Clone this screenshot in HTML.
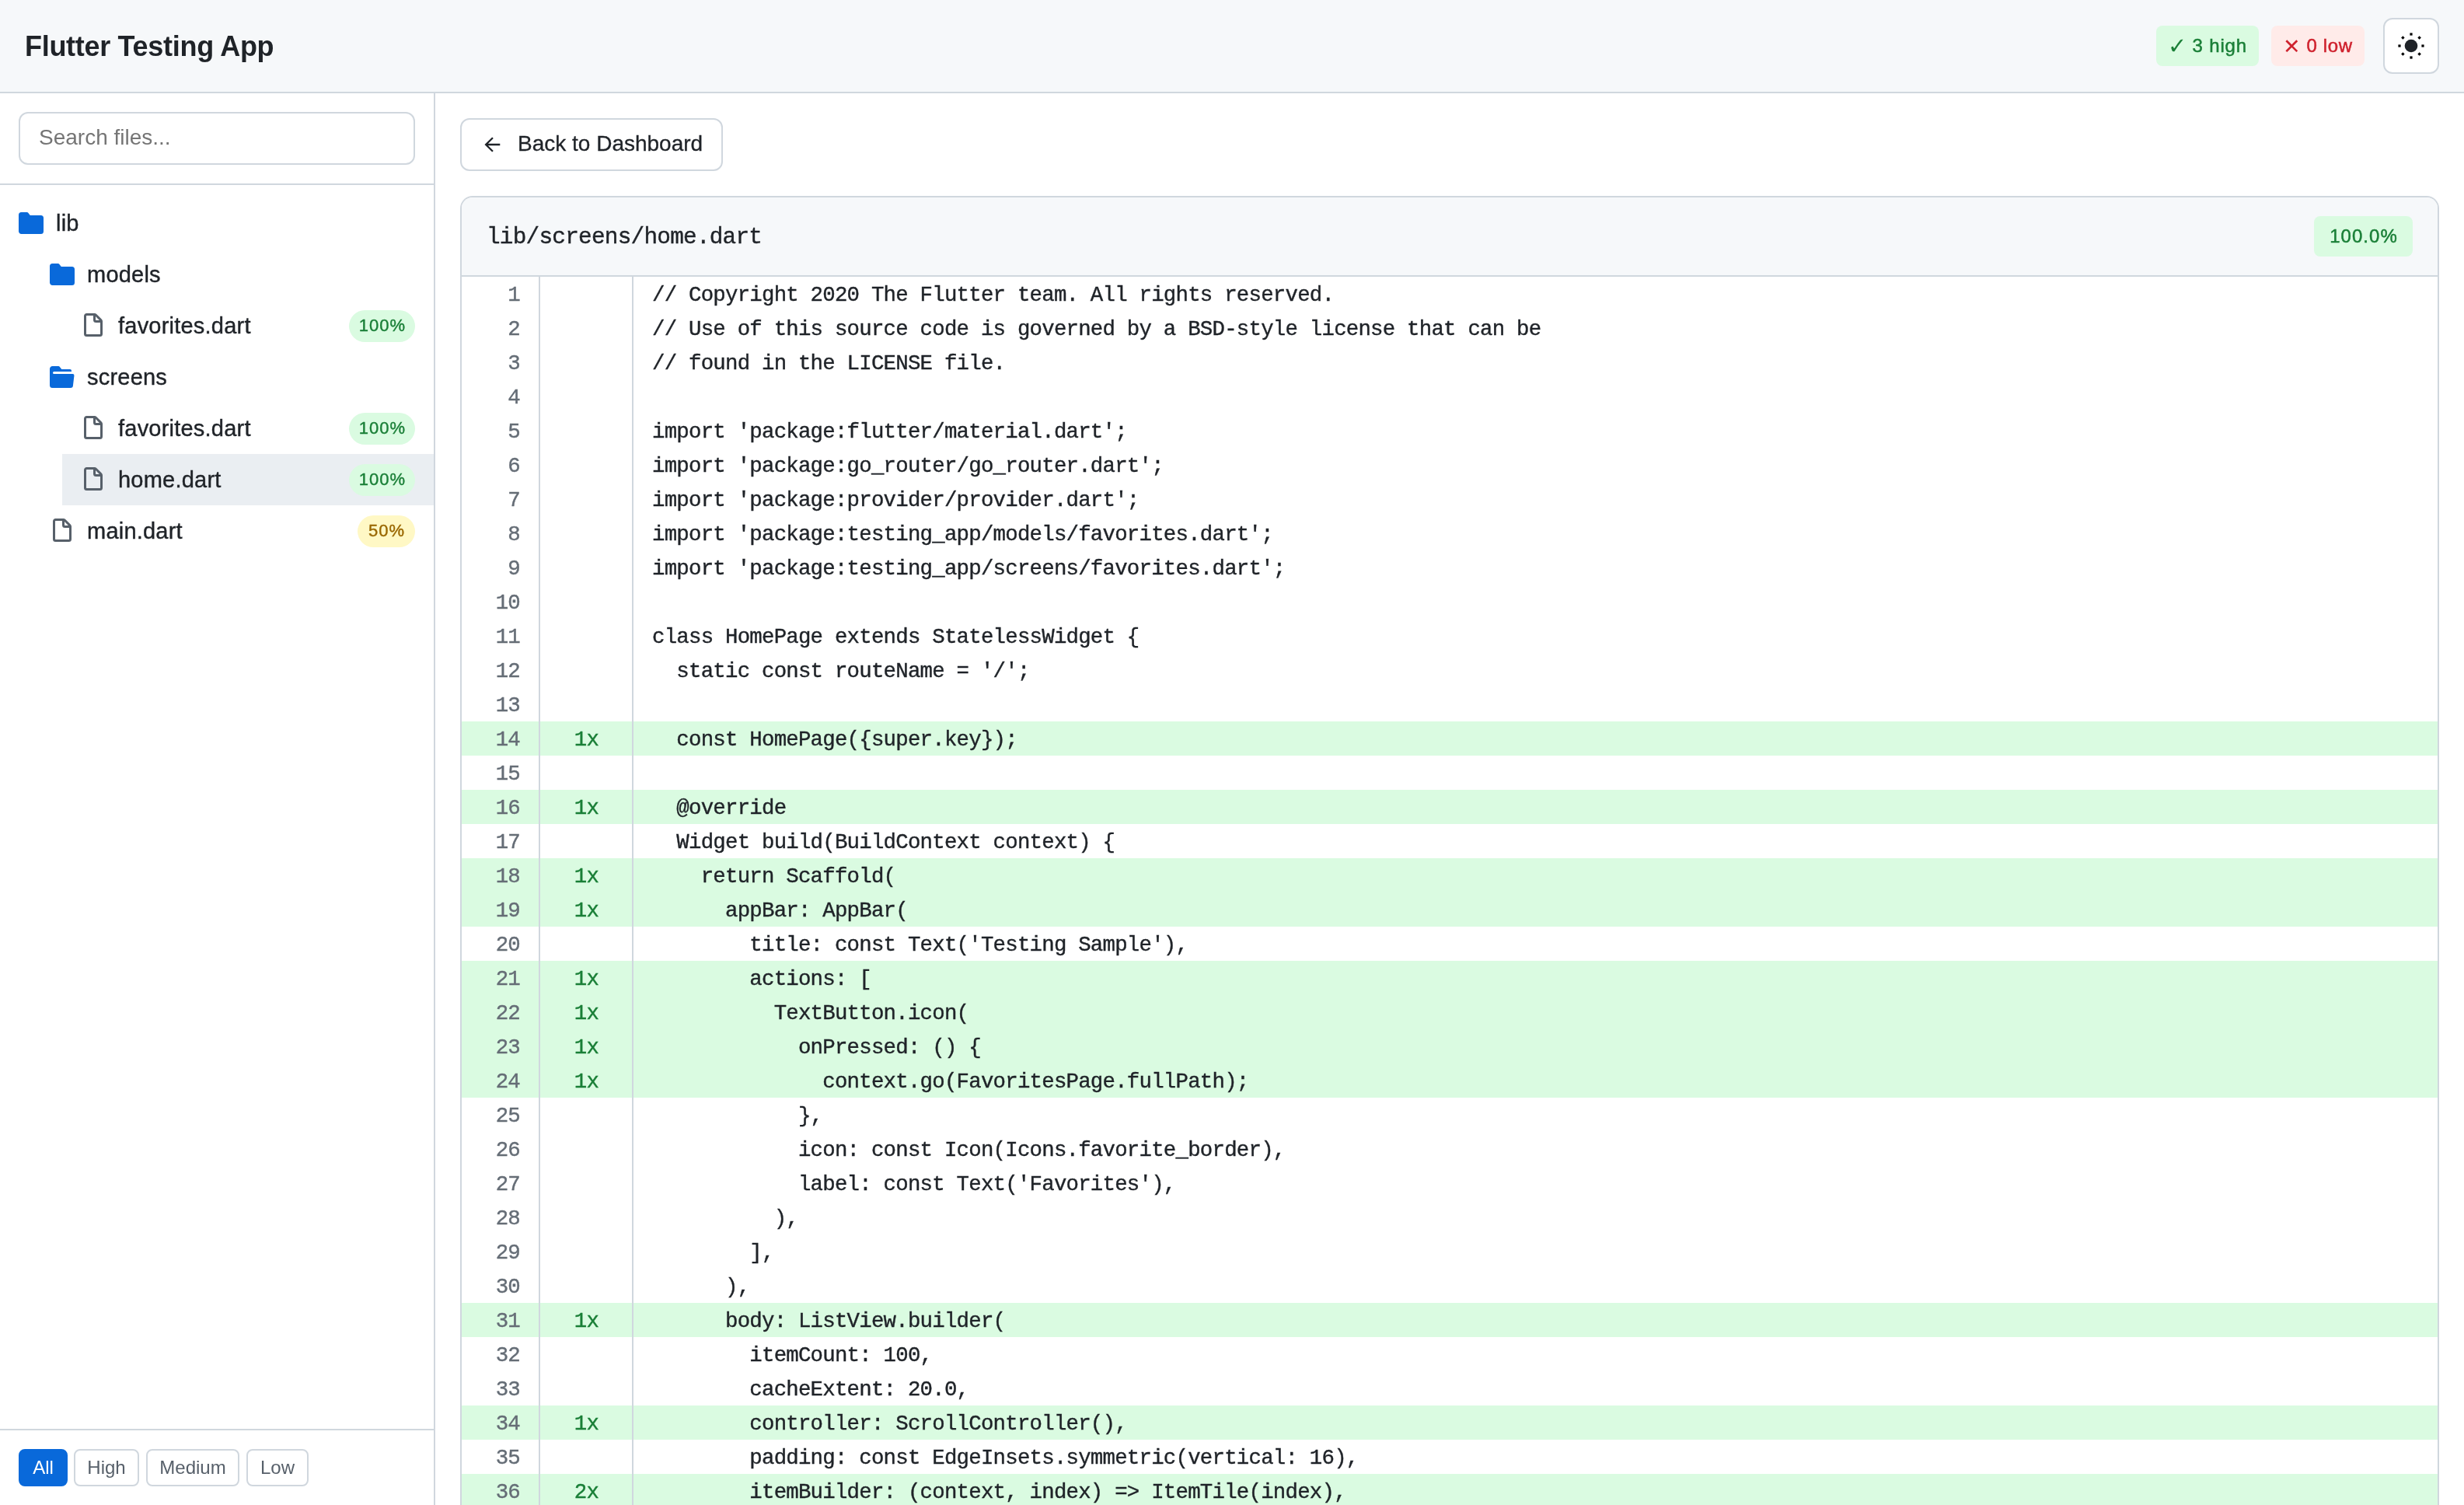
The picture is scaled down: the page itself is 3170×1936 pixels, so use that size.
<!DOCTYPE html>
<html lang="en">
<head>
<meta charset="utf-8">
<title>Flutter Testing App - Coverage</title>
<style>
html{zoom:2;margin:0;padding:0;background:#fff;overflow:hidden;}
*{box-sizing:border-box;}
body{margin:0;padding:0;width:1585px;height:968px;overflow:hidden;position:relative;background:#fff;color:#1f2328;
  font-family:"Liberation Sans",Arial,Helvetica,sans-serif;font-size:14px;line-height:1.5;transform-origin:0 0;will-change:transform;}
@media (max-width:2000px){html{width:792.5px;height:484px;}body{transform:scale(0.5);}}
.mono{font-family:"Liberation Mono","DejaVu Sans Mono",monospace;-webkit-text-stroke:0.2px currentColor;}

/* header */
#hdr{position:absolute;left:0;top:0;width:1585px;height:60px;background:#f6f8fa;border-bottom:1px solid #d0d7de;}
#title{position:absolute;left:16px;top:16.5px;font-size:18px;font-weight:700;line-height:27px;letter-spacing:-0.15px;color:#1f2328;white-space:nowrap;}
.hb{position:absolute;top:16.5px;height:26px;border-radius:4px;font-size:12px;font-weight:500;line-height:26px;letter-spacing:0.42px;white-space:nowrap;text-align:center;-webkit-text-stroke:0.25px currentColor;}
.hb span{font-size:14.5px;letter-spacing:0;-webkit-text-stroke:0;line-height:0;position:relative;top:1.1px;}
#hb2 span{font-size:13.4px;}
#hb2{letter-spacing:0.3px;}
#hb1{left:1387px;width:66px;background:#dafbe1;color:#1a7f37;}
#hb2{left:1461px;width:60px;background:#ffebe9;color:#cf222e;}
#theme{position:absolute;left:1533px;top:11.5px;width:36px;height:36px;border:1px solid #d0d7de;border-radius:6px;background:#fff;}
#theme svg{position:absolute;left:8px;top:8px;width:18px;height:18px;}

/* sidebar */
#side{position:absolute;left:0;top:60px;width:280px;height:908px;border-right:1px solid #d0d7de;background:#fff;}
#search{position:absolute;left:0;top:0;width:279px;height:59px;border-bottom:1px solid #d0d7de;}
#sbox{position:absolute;left:12px;top:12px;width:255px;height:34px;border:1px solid #d0d7de;border-radius:6px;background:#fff;
  padding:0 12px;font-size:14px;line-height:30.5px;color:#757575;white-space:nowrap;}
#tree{position:absolute;left:0;top:67px;width:279px;}
.row{position:relative;height:33px;padding-left:12px;white-space:nowrap;}
.row.sel{background:#eaeef2;}
.l1{margin-left:20px;}
.l2{margin-left:40px;}
.row svg{position:absolute;left:12px;top:8.5px;width:16px;height:16px;}
.row .nm{position:absolute;left:36px;top:6px;-webkit-text-stroke:0.2px currentColor;font-size:14.5px;line-height:21px;letter-spacing:0.11px;color:#1f2328;}
.pill{position:absolute;right:12px;top:6.5px;height:20.5px;width:42.5px;border-radius:10.25px;text-align:center;font-size:11px;font-weight:500;line-height:20px;letter-spacing:0.5px;padding-left:0.5px;-webkit-text-stroke:0.2px currentColor;}
.pill.py{width:37px;}
.pg{background:#dafbe1;color:#1a7f37;}
.py{background:#fff8c5;color:#9a6700;}
#foot{position:absolute;left:0;bottom:0;width:279px;height:49px;border-top:1px solid #d0d7de;}
.fb{position:absolute;top:12px;height:24px;border:1px solid #d0d7de;border-radius:4px;background:#fff;color:#57606a;font-size:12px;line-height:22px;text-align:center;white-space:nowrap;}
.fb.on{background:#0969da;border-color:#0969da;color:#fff;}

/* main */
#back{position:absolute;left:296px;top:76px;width:169px;height:34px;border:1px solid #d0d7de;border-radius:6px;background:#fff;}
#back .ar{position:absolute;left:14px;top:9.15px;width:14px;height:14px;}
#back .tx{position:absolute;left:36px;top:0;font-size:14px;line-height:31px;-webkit-text-stroke:0.15px currentColor;color:#1f2328;white-space:nowrap;}
#card{position:absolute;left:296px;top:126px;width:1273px;height:842px;border:1px solid #d0d7de;border-bottom:none;border-radius:8px 8px 0 0;overflow:hidden;background:#fff;}
#chead{position:absolute;left:0;top:0;width:1271px;height:51px;background:#f6f8fa;border-bottom:1px solid #d0d7de;}
#cpath{position:absolute;left:16px;top:12px;font-size:14.7px;letter-spacing:-0.385px;line-height:28px;color:#1f2328;white-space:nowrap;}
#cpct{position:absolute;right:16px;top:12px;height:26px;width:63.5px;border-radius:4px;background:#dafbe1;color:#1a7f37;font-size:12px;font-weight:500;line-height:26px;letter-spacing:0.52px;padding-left:0.5px;text-align:center;-webkit-text-stroke:0.25px currentColor;}
#code{position:absolute;left:0;top:51px;width:1271px;}
.ln{position:relative;height:22px;font-size:13.7px;letter-spacing:-0.387px;line-height:23.6px;white-space:pre;}
.ln.c{background:#dafbe1;}
.ln span{position:absolute;top:0;height:22px;}
.ln .n{left:0;width:50.5px;padding-right:13px;text-align:right;color:#656d76;}
.ln .h{left:50.5px;width:59px;text-align:center;padding-left:0.4px;color:#1a7f37;}
.vb{position:absolute;top:0;width:1px;height:800px;background:#d0d7de;z-index:2;}
.ln .t{left:122.5px;color:#1f2328;}
</style>
</head>
<body>
<div id="hdr">
  <div id="title">Flutter Testing App</div>
  <div class="hb" id="hb1"><span>✓</span> 3 high</div>
  <div class="hb" id="hb2"><span>✕</span> 0 low</div>
  <div id="theme"><svg viewBox="0 0 18 18"><circle cx="9" cy="9" r="4.15" fill="#1f2328"/><g fill="#000"><rect x="8.2" y="0.7" width="1.6" height="1.6"/><rect x="8.2" y="15.7" width="1.6" height="1.6"/><rect x="0.7" y="8.2" width="1.6" height="1.6"/><rect x="15.7" y="8.2" width="1.6" height="1.6"/><rect x="8.2" y="0.7" width="1.6" height="1.6" transform="rotate(45 9 9)"/><rect x="8.2" y="0.7" width="1.6" height="1.6" transform="rotate(135 9 9)"/><rect x="8.2" y="0.7" width="1.6" height="1.6" transform="rotate(225 9 9)"/><rect x="8.2" y="0.7" width="1.6" height="1.6" transform="rotate(315 9 9)"/></g></svg></div>
</div>

<div id="side">
  <div id="search"><div id="sbox">Search files...</div></div>
  <div id="tree">
    <div class="row"><svg viewBox="0 0 16 16"><path fill="#0969da" d="M1.75 1A1.75 1.75 0 0 0 0 2.75v10.5C0 14.216.784 15 1.75 15h12.5A1.75 1.75 0 0 0 16 13.25v-8.5A1.75 1.75 0 0 0 14.25 3H7.5a.25.25 0 0 1-.2-.1l-.9-1.2C6.07 1.26 5.55 1 5 1H1.75Z"/></svg><span class="nm">lib</span></div>
    <div class="row l1"><svg viewBox="0 0 16 16"><path fill="#0969da" d="M1.75 1A1.75 1.75 0 0 0 0 2.75v10.5C0 14.216.784 15 1.75 15h12.5A1.75 1.75 0 0 0 16 13.25v-8.5A1.75 1.75 0 0 0 14.25 3H7.5a.25.25 0 0 1-.2-.1l-.9-1.2C6.07 1.26 5.55 1 5 1H1.75Z"/></svg><span class="nm">models</span></div>
    <div class="row l2"><svg viewBox="0 0 16 16"><path fill="#57606a" d="M3.75 1.5a.25.25 0 00-.25.25v11.5c0 .138.112.25.25.25h8.5a.25.25 0 00.25-.25V6H9.75A1.75 1.75 0 018 4.25V1.5H3.75zm5.75.56v2.19c0 .138.112.25.25.25h2.19L9.5 2.06zM2 1.75C2 .784 2.784 0 3.75 0h5.086c.464 0 .909.184 1.237.513l3.414 3.414c.329.328.513.773.513 1.237v8.086A1.75 1.75 0 0112.25 15h-8.5A1.75 1.75 0 012 13.25V1.75z"/></svg><span class="nm">favorites.dart</span><span class="pill pg">100%</span></div>
    <div class="row l1"><svg viewBox="0 0 16 16"><path fill="#0969da" d="M.513 1.513A1.75 1.75 0 0 1 1.75 1h3.5c.55 0 1.07.26 1.4.7l.9 1.2a.25.25 0 0 0 .2.1H13a1 1 0 0 1 1 1v.5H2.75a.75.75 0 0 0 0 1.5h11.978a1 1 0 0 1 .994 1.117L15 13.25A1.75 1.75 0 0 1 13.25 15H1.75A1.75 1.75 0 0 1 0 13.25V2.75c0-.464.184-.91.513-1.237Z"/></svg><span class="nm">screens</span></div>
    <div class="row l2"><svg viewBox="0 0 16 16"><path fill="#57606a" d="M3.75 1.5a.25.25 0 00-.25.25v11.5c0 .138.112.25.25.25h8.5a.25.25 0 00.25-.25V6H9.75A1.75 1.75 0 018 4.25V1.5H3.75zm5.75.56v2.19c0 .138.112.25.25.25h2.19L9.5 2.06zM2 1.75C2 .784 2.784 0 3.75 0h5.086c.464 0 .909.184 1.237.513l3.414 3.414c.329.328.513.773.513 1.237v8.086A1.75 1.75 0 0112.25 15h-8.5A1.75 1.75 0 012 13.25V1.75z"/></svg><span class="nm">favorites.dart</span><span class="pill pg">100%</span></div>
    <div class="row l2 sel"><svg viewBox="0 0 16 16"><path fill="#57606a" d="M3.75 1.5a.25.25 0 00-.25.25v11.5c0 .138.112.25.25.25h8.5a.25.25 0 00.25-.25V6H9.75A1.75 1.75 0 018 4.25V1.5H3.75zm5.75.56v2.19c0 .138.112.25.25.25h2.19L9.5 2.06zM2 1.75C2 .784 2.784 0 3.75 0h5.086c.464 0 .909.184 1.237.513l3.414 3.414c.329.328.513.773.513 1.237v8.086A1.75 1.75 0 0112.25 15h-8.5A1.75 1.75 0 012 13.25V1.75z"/></svg><span class="nm">home.dart</span><span class="pill pg">100%</span></div>
    <div class="row l1"><svg viewBox="0 0 16 16"><path fill="#57606a" d="M3.75 1.5a.25.25 0 00-.25.25v11.5c0 .138.112.25.25.25h8.5a.25.25 0 00.25-.25V6H9.75A1.75 1.75 0 018 4.25V1.5H3.75zm5.75.56v2.19c0 .138.112.25.25.25h2.19L9.5 2.06zM2 1.75C2 .784 2.784 0 3.75 0h5.086c.464 0 .909.184 1.237.513l3.414 3.414c.329.328.513.773.513 1.237v8.086A1.75 1.75 0 0112.25 15h-8.5A1.75 1.75 0 012 13.25V1.75z"/></svg><span class="nm">main.dart</span><span class="pill py">50%</span></div>
  </div>
  <div id="foot">
    <div class="fb on" style="left:12px;width:31.5px">All</div>
    <div class="fb" style="left:47.5px;width:42px">High</div>
    <div class="fb" style="left:94px;width:60px">Medium</div>
    <div class="fb" style="left:158.5px;width:40px">Low</div>
  </div>
</div>

<div id="back"><svg class="ar" viewBox="0 0 14 14"><path d="M10.65 7H2M6 2.6L1.55 7L6 11.4" fill="none" stroke="#1f2328" stroke-width="1.15" stroke-linecap="butt" stroke-linejoin="miter"/></svg><span class="tx">Back to Dashboard</span></div>

<div id="card">
  <div id="chead"><div id="cpath" class="mono">lib/screens/home.dart</div><div id="cpct">100.0%</div></div>
  <div id="code" class="mono">
<div class="vb" style="left:49.5px"></div><div class="vb" style="left:109.5px"></div>
<!--CODE-->
<div class="ln"><span class="n">1</span><span class="h"></span><span class="t">// Copyright 2020 The Flutter team. All rights reserved.</span></div>
<div class="ln"><span class="n">2</span><span class="h"></span><span class="t">// Use of this source code is governed by a BSD-style license that can be</span></div>
<div class="ln"><span class="n">3</span><span class="h"></span><span class="t">// found in the LICENSE file.</span></div>
<div class="ln"><span class="n">4</span><span class="h"></span><span class="t"></span></div>
<div class="ln"><span class="n">5</span><span class="h"></span><span class="t">import 'package:flutter/material.dart';</span></div>
<div class="ln"><span class="n">6</span><span class="h"></span><span class="t">import 'package:go_router/go_router.dart';</span></div>
<div class="ln"><span class="n">7</span><span class="h"></span><span class="t">import 'package:provider/provider.dart';</span></div>
<div class="ln"><span class="n">8</span><span class="h"></span><span class="t">import 'package:testing_app/models/favorites.dart';</span></div>
<div class="ln"><span class="n">9</span><span class="h"></span><span class="t">import 'package:testing_app/screens/favorites.dart';</span></div>
<div class="ln"><span class="n">10</span><span class="h"></span><span class="t"></span></div>
<div class="ln"><span class="n">11</span><span class="h"></span><span class="t">class HomePage extends StatelessWidget {</span></div>
<div class="ln"><span class="n">12</span><span class="h"></span><span class="t">  static const routeName = '/';</span></div>
<div class="ln"><span class="n">13</span><span class="h"></span><span class="t"></span></div>
<div class="ln c"><span class="n">14</span><span class="h">1x</span><span class="t">  const HomePage({super.key});</span></div>
<div class="ln"><span class="n">15</span><span class="h"></span><span class="t"></span></div>
<div class="ln c"><span class="n">16</span><span class="h">1x</span><span class="t">  @override</span></div>
<div class="ln"><span class="n">17</span><span class="h"></span><span class="t">  Widget build(BuildContext context) {</span></div>
<div class="ln c"><span class="n">18</span><span class="h">1x</span><span class="t">    return Scaffold(</span></div>
<div class="ln c"><span class="n">19</span><span class="h">1x</span><span class="t">      appBar: AppBar(</span></div>
<div class="ln"><span class="n">20</span><span class="h"></span><span class="t">        title: const Text('Testing Sample'),</span></div>
<div class="ln c"><span class="n">21</span><span class="h">1x</span><span class="t">        actions: [</span></div>
<div class="ln c"><span class="n">22</span><span class="h">1x</span><span class="t">          TextButton.icon(</span></div>
<div class="ln c"><span class="n">23</span><span class="h">1x</span><span class="t">            onPressed: () {</span></div>
<div class="ln c"><span class="n">24</span><span class="h">1x</span><span class="t">              context.go(FavoritesPage.fullPath);</span></div>
<div class="ln"><span class="n">25</span><span class="h"></span><span class="t">            },</span></div>
<div class="ln"><span class="n">26</span><span class="h"></span><span class="t">            icon: const Icon(Icons.favorite_border),</span></div>
<div class="ln"><span class="n">27</span><span class="h"></span><span class="t">            label: const Text('Favorites'),</span></div>
<div class="ln"><span class="n">28</span><span class="h"></span><span class="t">          ),</span></div>
<div class="ln"><span class="n">29</span><span class="h"></span><span class="t">        ],</span></div>
<div class="ln"><span class="n">30</span><span class="h"></span><span class="t">      ),</span></div>
<div class="ln c"><span class="n">31</span><span class="h">1x</span><span class="t">      body: ListView.builder(</span></div>
<div class="ln"><span class="n">32</span><span class="h"></span><span class="t">        itemCount: 100,</span></div>
<div class="ln"><span class="n">33</span><span class="h"></span><span class="t">        cacheExtent: 20.0,</span></div>
<div class="ln c"><span class="n">34</span><span class="h">1x</span><span class="t">        controller: ScrollController(),</span></div>
<div class="ln"><span class="n">35</span><span class="h"></span><span class="t">        padding: const EdgeInsets.symmetric(vertical: 16),</span></div>
<div class="ln c"><span class="n">36</span><span class="h">2x</span><span class="t">        itemBuilder: (context, index) =&gt; ItemTile(index),</span></div>
<div class="ln"><span class="n">37</span><span class="h"></span><span class="t">      ),</span></div>
<!--/CODE-->
  </div>
</div>
</body>
</html>
